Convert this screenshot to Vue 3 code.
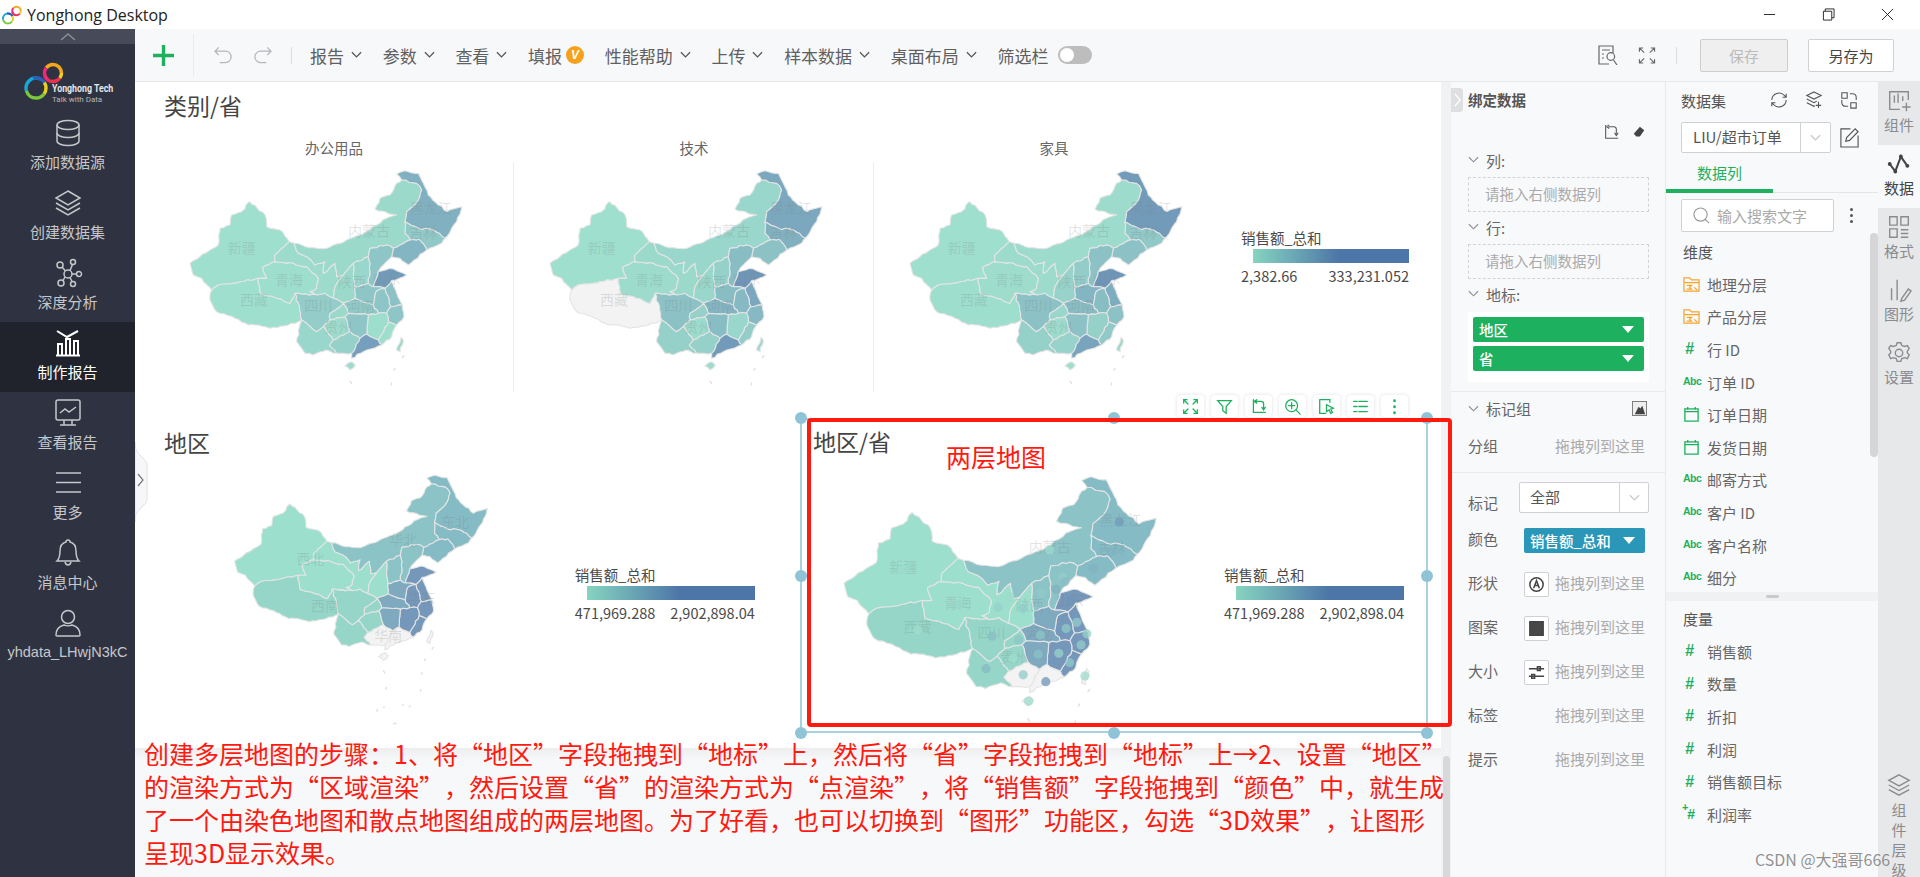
<template>
  <div class="app" lang="zh-CN">
    <!-- 标题栏 -->
    <header class="titlebar">
      <svg class="title-logo" viewBox="0 0 40 38">
        <circle v-for="a in ringArcs" :key="a.key" :cx="a.cx" :cy="a.cy" :r="a.r" :stroke="a.color" :stroke-dasharray="a.dash" :stroke-dashoffset="a.offset" stroke-width="4" fill="none" />
      </svg>
      <span class="title-text">Yonghong Desktop</span>
      <div class="win-btns">
        <svg viewBox="0 0 14 14" class="win-btn"><path d="M1 7h12" /></svg>
        <svg viewBox="0 0 14 14" class="win-btn"><path d="M1.5 3.5h9v9.5h-9zM3.5 3.5V1h9.5v9.5h-2.5" /></svg>
        <svg viewBox="0 0 14 14" class="win-btn"><path d="M1 1l12 12M13 1L1 13" /></svg>
      </div>
    </header>

    <div class="shell">
      <!-- 左侧导航 -->
      <aside class="sidebar">
        <div class="side-top">
          <svg viewBox="0 0 16 8" class="side-up"><path d="M1 7l7-6 7 6" /></svg>
        </div>
        <div class="side-logo">
          <svg class="side-rings" viewBox="0 0 40 38">
            <circle v-for="a in ringArcs" :key="a.key" :cx="a.cx" :cy="a.cy" :r="a.r" :stroke="a.color" :stroke-dasharray="a.dash" :stroke-dashoffset="a.offset" stroke-width="3.4" fill="none" />
          </svg>
          <div class="side-brand">
            <div class="brand-name">Yonghong Tech</div>
            <div class="brand-sub">Talk with Data</div>
          </div>
        </div>
        <div v-for="item in navItems" :key="item.label" class="nav-item" :class="{ active: item.active }">
          <svg viewBox="0 0 30 30" class="nav-icon"><path v-for="d in item.icon" :key="d" :d="d" /></svg>
          <span class="nav-label" :class="{ user: item.user }">{{ item.label }}</span>
        </div>
        <div class="side-handle">
          <svg viewBox="0 0 13 80" width="13" height="80">
            <path d="M0 0c0 8 2 10 6 14 5 5 6 6 6 10v32c0 4-1 5-6 10-4 4-6 6-6 14z" fill="#f6f7f9" stroke="#dfe1e6" />
            <path d="M3 32l5 6-5 6" fill="none" stroke="#777" stroke-width="1.2" />
          </svg>
        </div>
      </aside>

      <main class="main">
        <!-- 工具栏 -->
        <div class="toolbar">
          <svg viewBox="0 0 22 22" class="tb-plus"><path d="M11 0v22M0 11h22" /></svg>
          <i class="tb-sep tall"></i>
          <svg viewBox="0 0 20 18" class="tb-undo"><path d="M5 1L1 5l4 4M1 5h11a6 6 0 0 1 0 12H6" /></svg>
          <svg viewBox="0 0 20 18" class="tb-undo redo"><path d="M15 1l4 4-4 4M19 5H8a6 6 0 0 0 0 12h6" /></svg>
          <i class="tb-sep"></i>
          <div class="tb-menu">
            <div v-for="m in menus" :key="m.label" class="tb-item">
              <span>{{ m.label }}</span>
              <svg v-if="m.chevron" viewBox="0 0 12 8" class="chev"><path d="M1 1l5 5 5-5" /></svg>
              <b v-if="m.badge" class="v-badge">V</b>
              <i v-if="m.toggle" class="toggle"></i>
            </div>
          </div>
          <div class="tb-right">
            <svg viewBox="0 0 20 20" class="tb-tool"><path d="M15 8V1H1v18h10M4 5h8M4 9h2M4 13h2" /><path d="M9 9.5a3.8 3.8 0 1 0 7.6 0a3.8 3.8 0 1 0-7.6 0zM15.5 13l3.5 5" transform="translate(0 2)" /></svg>
            <svg viewBox="0 0 18 18" class="tb-tool small"><path d="M1 5V1h4M1 1l5 5M17 5V1h-4M17 1l-5 5M1 13v4h4M1 17l5-5M17 13v4h-4M17 17l-5-5" /></svg>
            <i class="tb-sep"></i>
            <button class="btn disabled">保存</button>
            <button class="btn">另存为</button>
          </div>
        </div>

        <div class="workspace">
          <!-- 报告画布 -->
          <section class="canvas">
            <div class="row-top">
              <h2 class="w-title">类别/省</h2>
              <div class="facet-row">
                <div v-for="f in facets" :key="f.title" class="facet">
                  <div class="facet-title">{{ f.title }}</div>
                  <div class="facet-body">
                    <ChinaMap class="facet-map" :fills="f.fills" :scale="1 / 3" :vw="1080" :vh="687" inset />
                  </div>
                </div>
                <div class="legend narrow top-legend">
                  <div class="legend-title">销售额_总和</div>
                  <div class="legend-bar"></div>
                  <div class="legend-range"><span>2,382.66</span><span>333,231.052</span></div>
                </div>
              </div>
            </div>

            <div class="row-bottom">
              <div class="widget plain">
                <h2 class="w-title">地区</h2>
                <div class="w-body">
                  <ChinaMap class="region-map" :fills="regionFills" :scale="0.31" :vw="1080" :vh="840" region :labels="regionLabels" />
                  <div class="legend">
                    <div class="legend-title">销售额_总和</div>
                    <div class="legend-bar"></div>
                    <div class="legend-range"><span>471,969.288</span><span>2,902,898.04</span></div>
                  </div>
                </div>
              </div>

              <div class="widget selected">
                <h2 class="w-title">地区/省</h2>
                <div class="w-body">
                  <ChinaMap class="layer-map" :fills="regionFills" :scale="0.383" :vw="1000" :vh="690" region inset :dots="dots" />
                  <div class="legend">
                    <div class="legend-title">销售额_总和</div>
                    <div class="legend-bar"></div>
                    <div class="legend-range"><span>471,969.288</span><span>2,902,898.04</span></div>
                  </div>
                </div>
                <div class="map-note">两层地图</div>
                <i v-for="h in handles" :key="h" class="handle" :class="h"></i>
                <div class="w-tools">
                  <span v-for="(t, i) in widgetTools" :key="i" class="w-tool">
                    <svg viewBox="0 0 20 20"><path v-for="d in t" :key="d" :d="d" /></svg>
                  </span>
                </div>
              </div>
            </div>

            <div class="canvas-foot">
              <p class="note">
                <span>创建多层地图的步骤：1、将“地区”字段拖拽到“地标”上，然后将“省”字段拖拽到“地标”上→2、设置“地区”</span>
                <span>的渲染方式为“区域渲染”，然后设置“省”的渲染方式为“点渲染”，将“销售额”字段拖拽到“颜色”中，就生成</span>
                <span>了一个由染色地图和散点地图组成的两层地图。为了好看，也可以切换到“图形”功能区，勾选“3D效果”，让图形</span>
                <span>呈现3D显示效果。</span>
              </p>
            </div>
          </section>

          <div class="gutter"><i></i></div>

          <!-- 绑定数据 -->
          <section class="bind">
            <div class="bind-tab">
              <svg viewBox="0 0 8 16"><path d="M1 1l6 7-6 7" /></svg>
            </div>
            <div class="bind-head">绑定数据</div>
            <div class="bind-tools">
              <svg viewBox="0 0 18 18" class="bind-ico"><path d="M3 1v15h14M6 3h6a3 3 0 0 1 3 3v5M4 3l3-2M4 3l3 2M13 10l2 3 2-3" /></svg>
              <svg viewBox="0 0 16 16" class="bind-ico solid"><path d="M9 2l5 4-5 7H5L2 10z" /></svg>
            </div>

            <div class="bind-label"><svg viewBox="0 0 12 8" class="chev light"><path d="M1 1l5 5 5-5" /></svg>列:</div>
            <div class="drop">请拖入右侧数据列</div>
            <div class="bind-label"><svg viewBox="0 0 12 8" class="chev light"><path d="M1 1l5 5 5-5" /></svg>行:</div>
            <div class="drop">请拖入右侧数据列</div>
            <div class="bind-label"><svg viewBox="0 0 12 8" class="chev light"><path d="M1 1l5 5 5-5" /></svg>地标:</div>
            <div class="geo-box">
              <div class="pill">地区<i class="caret"></i></div>
              <div class="pill">省<i class="caret"></i></div>
            </div>

            <div class="mark-head">
              <svg viewBox="0 0 12 8" class="chev light"><path d="M1 1l5 5 5-5" /></svg>标记组
              <svg viewBox="0 0 16 16" class="mark-ico"><rect x="0.5" y="0.5" width="15" height="15" fill="#eee" stroke="#777" /><path d="M3 14l4-8 2 2 2-3 3 9z" fill="#444" /></svg>
            </div>
            <div class="mark-row group"><label>分组</label><span class="hint">拖拽列到这里</span></div>
            <div class="mark-row select-row">
              <label>标记</label>
              <div class="mark-select"><span>全部</span><i><svg viewBox="0 0 12 8" class="chev pale"><path d="M1 1l5 5 5-5" /></svg></i></div>
            </div>
            <div class="mark-row"><label>颜色</label><div class="pill blue">销售额_总和<i class="caret"></i></div></div>
            <div v-for="r in markRows" :key="r.label" class="mark-row">
              <label>{{ r.label }}</label>
              <span v-if="r.icon" class="mark-box">
                <svg viewBox="0 0 20 20"><path v-for="d in r.icon" :key="d" :d="d" :class="r.solid ? 'fill' : ''" /></svg>
              </span>
              <span class="hint">拖拽列到这里</span>
            </div>
          </section>

          <!-- 数据集 -->
          <section class="dataset">
            <div class="ds-head">
              <span>数据集</span>
              <div class="ds-icons">
                <svg viewBox="0 0 20 20"><path d="M2 10a8 8 0 0 1 14-5l2 2M18 3v4h-4M18 10a8 8 0 0 1-14 5l-2-2M2 17v-4h4" /></svg>
                <svg viewBox="0 0 20 20"><path d="M10 1l8 4-8 4-8-4zM2 9l8 4 3-1.5M2 13l8 4 1-.5M15 12v7M12 16h6" /></svg>
                <svg viewBox="0 0 20 20"><path d="M2 2h6v6H2zM12 13h6v6h-6zM11 3h3a4 4 0 0 1 4 4v3M9 17H6a4 4 0 0 1-4-4v-3" /></svg>
              </div>
            </div>
            <div class="ds-select-row">
              <div class="ds-select"><span>LIU/超市订单</span><i><svg viewBox="0 0 12 8" class="chev pale"><path d="M1 1l5 5 5-5" /></svg></i></div>
              <svg viewBox="0 0 22 22" class="ds-edit"><path d="M12 2H2v19h18V9M7 15l1-4 9-9 3 3-9 9z" /></svg>
            </div>
            <div class="ds-tabs"><span class="ds-tab">数据列</span></div>
            <div class="ds-search-row">
              <div class="ds-search">
                <svg viewBox="0 0 18 18"><path d="M1 8a7 7 0 1 0 14 0a7 7 0 1 0-14 0zM13 13l4 4" /></svg>
                <span>输入搜索文字</span>
              </div>
              <i class="kebab"><b></b><b></b><b></b></i>
            </div>

            <div class="fields upper">
              <div class="field-head">维度</div>
              <div v-for="f in dimensions" :key="f.name" class="field">
                <span class="field-ico">
                  <svg v-if="f.type === 'folder'" viewBox="0 0 18 18" class="ico-folder"><path d="M1 2h6l2 2h8v12H1zM1 7h16M4 10h5l-2 2 2 2H4M12 12l3 3" /></svg>
                  <svg v-else-if="f.type === 'date'" viewBox="0 0 18 18" class="ico-date"><path d="M2 3h14v13H2zM2 6h14M5 1v3M13 1v3" /></svg>
                  <b v-else-if="f.type === 'abc'" class="ico-abc">Abc</b>
                  <b v-else class="ico-num">#</b>
                </span>
                <span>{{ f.name }}</span>
              </div>
              <i class="fields-thumb"></i>
            </div>
            <div class="band"><i></i></div>
            <div class="fields">
              <div class="field-head low">度量</div>
              <div v-for="f in measures" :key="f.name" class="field">
                <span class="field-ico">
                  <b class="ico-num" :class="{ calc: f.calc }">#</b>
                  <b v-if="f.calc" class="ico-plus">+</b>
                </span>
                <span>{{ f.name }}</span>
              </div>
            </div>
          </section>

          <!-- 右侧标签 -->
          <nav class="rail">
            <div v-for="r in railItems" :key="r.label" class="rail-item" :class="{ on: r.on }">
              <svg viewBox="0 0 28 28"><path v-for="d in r.icon" :key="d" :d="d" /></svg>
              <span>{{ r.label }}</span>
            </div>
            <div class="rail-item layers">
              <svg viewBox="0 0 28 28"><path d="M14 3l11 6-11 6-11-6zM3 14l11 6 11-6M3 19l11 6 11-6" /></svg>
              <span>组件层级</span>
            </div>
          </nav>

          <div class="red-frame"></div>
        </div>
      </main>
    </div>
    <div class="watermark">CSDN @大强哥666</div>
  </div>
</template>

<script setup>
import { h } from 'vue'

const circle = (x, y, r) => `M${x - r} ${y}a${r} ${r} 0 1 0 ${2 * r} 0a${r} ${r} 0 1 0 ${-2 * r} 0`

// logo 两个圆环，用分段虚线拼颜色
const arc = (key, cx, cy, r, color, from, len) => {
  const c = 2 * Math.PI * r
  return { key, cx, cy, r, color, dash: `${c * len} ${c * (1 - len)}`, offset: -c * from }
}
const ringArcs = [
  arc('b1', 12, 26, 10, '#17a7d8', 0.45, 0.35),
  arc('b2', 12, 26, 10, '#2b5fb8', 0.7, 0.2),
  arc('b3', 12, 26, 10, '#7cc83c', 0.1, 0.35),
  arc('b4', 12, 26, 10, '#e8d020', 0.9, 0.2),
  arc('r1', 29, 11, 8.5, '#f5a81c', 0.6, 0.4),
  arc('r2', 29, 11, 8.5, '#ee2f4e', 0.1, 0.35),
  arc('r3', 29, 11, 8.5, '#ec2a7c', 0.35, 0.25),
  arc('r4', 29, 11, 8.5, '#f0d020', 0, 0.1),
]

const navItems = [
  { label: '添加数据源', icon: ['M4 7a11 4.5 0 0 1 22 0a11 4.5 0 0 1-22 0', 'M4 7v16a11 4.5 0 0 0 22 0V7', 'M4 15a11 4.5 0 0 0 22 0'] },
  { label: '创建数据集', icon: ['M15 3l12 7-12 7-12-7z', 'M3 15l12 7 12-7', 'M3 20l12 7 12-7'] },
  { label: '深度分析', icon: [circle(15, 16, 4), circle(7, 7, 3), circle(20, 4, 2.5), circle(26, 16, 2.5), circle(20, 26, 2.5), circle(8, 25, 3), 'M17 12.5l2.5-6M18.5 16H23.5M17 19.5l2 4M12 19l-2 3.5M12.5 13L9 9'] },
  { label: '制作报告', active: true, icon: ['M5 27V16h4v11', 'M13 27V11h4v16', 'M21 27V13h4v14', 'M3 27.5h24', 'M4 3l10 6 11-6'] },
  { label: '查看报告', icon: ['M5 2h20a2 2 0 0 1 2 2v16a2 2 0 0 1-2 2H5a2 2 0 0 1-2-2V4a2 2 0 0 1 2-2z', 'M7 15l5-4 4 3 7-5', 'M11 22v5M19 22v5M7 27h16'] },
  { label: '更多', icon: ['M3 5h25', 'M3 14.5h25', 'M3 24h25'] },
  { label: '消息中心', icon: ['M15 2c-1.5 0-2 1-2 2-4 1-6 4-6 9 0 6-1 8-3 10h22c-2-2-3-4-3-10 0-5-2-8-6-9 0-1-.5-2-2-2z', 'M12 24c.5 2 1.5 3 3 3s2.5-1 3-3'] },
  { label: 'yhdata_LHwjN3kC', user: true, icon: [circle(15, 9, 6.5), 'M3 27c0-6 4-9 8-10 2 1 6 1 8 0 4 1 8 4 8 10 0 .8-.5 1-1 1H4c-.5 0-1-.2-1-1z'] },
]

const menus = [
  { label: '报告', chevron: true },
  { label: '参数', chevron: true },
  { label: '查看', chevron: true },
  { label: '填报', badge: true },
  { label: '性能帮助', chevron: true },
  { label: '上传', chevron: true },
  { label: '样本数据', chevron: true },
  { label: '桌面布局', chevron: true },
  { label: '筛选栏', toggle: true },
]

const handles = ['tl', 'tc', 'tr', 'ml', 'mr', 'bl', 'bc', 'br']

const widgetTools = [
  ['M2 6V2h4M14 2h4v4M2 14v4h4M18 14v4h-4M3 3l4 4M17 3l-4 4M3 17l4-4M17 17l-4-4'],
  ['M2 3h16l-6 7v8l-4-3v-5z'],
  ['M4 2v15h14M7 4h6a3 3 0 0 1 3 3v5M5 4l3-2M5 4l3 2M14 11l2 3 2-3'],
  [circle(9, 9, 7), 'M14 14l5 5M9 5.5v7M5.5 9h7'],
  ['M2 2h12v3M2 2v16h7', 'M10 8l8 4-3 1 2 4-2 1-2-4-3 2z'],
  ['M2 4h4M8 4h10M2 10h4M8 10h10M2 16h4M8 16h10'],
  ['M10 3v.5M10 10v.5M10 17v.5'],
]

const markRows = [
  { label: '形状', icon: [circle(10, 10, 7), 'M7 14l3-8 3 8M8 11h4'] },
  { label: '图案', solid: true, icon: ['M3 3h14v14H3z'] },
  { label: '大小', icon: ['M2 6h16M2 14h16', 'M11 4h3v4h-3zM5 12h3v4H5z'] },
  { label: '标签' },
  { label: '提示' },
]

const dimensions = [
  { name: '地理分层', type: 'folder' },
  { name: '产品分层', type: 'folder' },
  { name: '行 ID', type: 'num' },
  { name: '订单 ID', type: 'abc' },
  { name: '订单日期', type: 'date' },
  { name: '发货日期', type: 'date' },
  { name: '邮寄方式', type: 'abc' },
  { name: '客户 ID', type: 'abc' },
  { name: '客户名称', type: 'abc' },
  { name: '细分', type: 'abc' },
]

const measures = [
  { name: '销售额' },
  { name: '数量' },
  { name: '折扣' },
  { name: '利润' },
  { name: '销售额目标' },
  { name: '利润率', calc: true },
]

const railItems = [
  { label: '组件', icon: ['M24 13V4H4v19h11', 'M9 8v8M13 6v10M18 9v5', 'M22 16v9M17.5 20.5h9'] },
  { label: '数据', on: true, icon: ['M4 14l6 8 6-16 7 10', circle(4, 14, 1), circle(10, 22, 1), circle(16, 6, 1), circle(23, 16, 1)] },
  { label: '格式', icon: ['M4 3h8v9H4zM16 3h8v9h-8zM4 16h8v9H4z', 'M16 17h8M16 21h8M16 25h8'] },
  { label: '图形', icon: ['M6 12v13M12 3v22', 'M17 23l7-10 3 2-7 10-4 1z'] },
  { label: '设置', icon: [circle(14, 14, 4), 'M12 3h4l1 3 3 1 3-1 2 3-2 3v2l2 2-2 4-3-1-3 1-1 3h-4l-1-3-3-1-3 1-2-4 2-2v-2l-2-3 2-3 3 1 3-1z'] },
]

// 省份轮廓，坐标系是 1080x750 的地图单位
const provinces = {
  xj: [60, 340, 90, 320, 145, 285, 150, 235, 180, 225, 185, 195, 215, 185, 238, 155, 262, 175, 285, 195, 290, 230, 330, 240, 358, 275, 315, 315, 315, 335, 278, 352, 290, 385, 265, 385, 190, 400, 145, 405, 125, 420, 95, 385, 70, 375],
  xz: [125, 420, 145, 405, 190, 400, 265, 385, 272, 432, 310, 440, 360, 460, 375, 430, 392, 490, 395, 510, 355, 525, 300, 535, 265, 525, 235, 525, 195, 505, 140, 485, 120, 450],
  qh: [278, 352, 315, 335, 370, 340, 410, 350, 445, 385, 440, 415, 420, 425, 440, 435, 385, 430, 375, 430, 360, 460, 310, 440, 272, 432, 265, 385, 290, 385],
  gs: [358, 275, 372, 280, 385, 310, 410, 320, 435, 345, 465, 335, 460, 370, 495, 340, 500, 380, 520, 375, 495, 410, 490, 445, 465, 430, 440, 435, 420, 425, 440, 415, 445, 385, 410, 350, 370, 340, 315, 335, 315, 315],
  nm: [372, 280, 430, 293, 470, 295, 530, 270, 570, 255, 620, 225, 650, 205, 680, 195, 615, 178, 630, 145, 660, 135, 680, 100, 695, 90, 740, 100, 755, 120, 745, 150, 710, 185, 705, 215, 705, 250, 720, 270, 670, 295, 650, 285, 600, 295, 595, 320, 550, 340, 520, 375, 500, 380, 495, 340, 460, 370, 465, 335, 435, 345, 410, 320, 385, 310],
  hlj: [680, 72, 705, 62, 745, 70, 760, 100, 775, 135, 830, 185, 875, 170, 860, 215, 825, 265, 790, 240, 745, 235, 705, 215, 710, 185, 745, 150, 755, 120, 740, 100, 695, 90],
  jl: [705, 215, 745, 235, 790, 240, 825, 265, 815, 280, 770, 300, 748, 268, 720, 270, 705, 250],
  ln: [670, 295, 720, 270, 748, 268, 770, 300, 715, 345, 690, 325, 665, 320],
  heb: [600, 295, 650, 285, 670, 295, 665, 320, 640, 345, 625, 365, 610, 410, 595, 400, 600, 340, 595, 320],
  sx: [550, 340, 595, 320, 600, 340, 595, 400, 555, 412, 550, 375],
  sax: [520, 375, 550, 340, 550, 375, 555, 412, 555, 445, 520, 460, 490, 445, 495, 410],
  sd: [625, 365, 660, 355, 710, 375, 665, 392, 645, 415, 610, 410],
  hen: [555, 412, 595, 400, 610, 410, 645, 415, 618, 425, 610, 465, 555, 445],
  js: [645, 415, 665, 392, 680, 430, 697, 465, 662, 470, 655, 440],
  ah: [618, 425, 645, 415, 655, 440, 662, 470, 650, 490, 625, 490, 610, 465],
  hub: [520, 460, 555, 445, 610, 465, 625, 490, 595, 495, 535, 490, 530, 475],
  zj: [662, 470, 697, 465, 702, 500, 680, 525, 655, 515, 650, 490],
  fj: [655, 515, 680, 525, 665, 560, 635, 585, 625, 570],
  jx: [595, 495, 625, 490, 650, 490, 655, 515, 625, 570, 590, 552],
  hun: [535, 490, 595, 495, 590, 552, 570, 565, 540, 545, 525, 500],
  cq: [480, 490, 520, 460, 530, 475, 535, 490, 525, 500, 480, 510],
  gz: [460, 530, 480, 510, 525, 500, 540, 545, 490, 570],
  sc: [375, 430, 385, 430, 440, 435, 465, 430, 490, 445, 520, 460, 480, 490, 480, 510, 460, 530, 440, 545, 395, 510, 392, 490],
  yn: [395, 510, 440, 545, 460, 530, 490, 570, 478, 585, 500, 610, 470, 600, 430, 615, 405, 610, 380, 575],
  gx: [490, 570, 540, 545, 570, 565, 545, 610, 500, 610, 478, 585],
  gd: [570, 565, 590, 552, 625, 570, 635, 585, 580, 605, 545, 625, 545, 610],
  hi: [525, 648, 545, 635, 556, 645, 540, 660],
  tw: [680, 600, 693, 562, 700, 570, 690, 605],
}

// 区域图按这个分组，同组之间不画边界
const regionOf = {
  xj: 'nw', qh: 'nw', gs: 'nw', sax: 'nw',
  xz: 'sw', sc: 'sw', yn: 'sw', gz: 'sw', cq: 'sw',
  nm: 'n', heb: 'n', sx: 'n',
  hlj: 'ne', jl: 'ne', ln: 'ne',
  sd: 'e', js: 'e', ah: 'e', zj: 'e', fj: 'e', jx: 'e',
  hen: 'c', hub: 'c', hun: 'c',
  gd: 's', gx: 's', hi: 's', tw: 's',
}

const lerp = (v) => {
  const t = Math.pow(v, 1.3)
  const a = [159, 223, 205]
  const b = [111, 150, 185]
  return `rgb(${a.map((c, i) => Math.round(c + (b[i] - c) * t)).join(',')})`
}
const shade = (vals) => {
  const out = {}
  Object.keys(vals).forEach((k) => { out[k] = vals[k] === null ? '#f3f3f3' : lerp(vals[k]) })
  return out
}

const facets = [
  { title: '办公用品', fills: shade({ xj: 0.02, xz: 0, qh: 0.05, gs: 0.1, nm: 0.15, hlj: 0.7, jl: 0.4, ln: 0.65, heb: 0.45, sx: 0.2, sax: 0.15, sd: 0.95, hen: 0.45, js: 0.5, ah: 0.45, hub: 0.4, zj: 0.45, jx: 0.05, fj: 0.03, hun: 0.45, gd: 0.9, gx: 0.3, gz: 0.1, cq: 0.15, sc: 0.35, yn: 0.2, hi: 0.08, tw: 0.2 }) },
  { title: '技术', fills: shade({ xj: 0.02, xz: null, qh: 0.08, gs: 0.15, nm: 0.2, hlj: 0.8, jl: 0.7, ln: 0.5, heb: 0.55, sx: 0.3, sax: 0.2, sd: 1, hen: 0.55, js: 0.8, ah: 0.6, hub: 0.65, zj: 0.6, jx: 0.2, fj: 0.35, hun: 0.55, gd: 0.95, gx: 0.3, gz: 0.1, cq: 0.3, sc: 0.5, yn: 0.3, hi: 0.1, tw: 0.2 }) },
  { title: '家具', fills: shade({ xj: 0, xz: 0.05, qh: 0.06, gs: 0.1, nm: 0.1, hlj: 0.95, jl: 0.4, ln: 0.5, heb: 0.5, sx: 0.35, sax: 0.25, sd: 1, hen: 0.65, js: 0.75, ah: 0.55, hub: 0.55, zj: 0.5, jx: 0.3, fj: 0.4, hun: 0.5, gd: 0.85, gx: 0.25, gz: 0.1, cq: 0.2, sc: 0.5, yn: 0.3, hi: 0.05, tw: 0.2 }) },
]

const regionColors = { nw: '#9cdfcd', sw: '#95d6c8', n: '#8bc3c6', ne: '#84bbc5', e: '#7597ba', c: '#7ea9bf', s: '#f3f3f3' }
const regionFills = {}
Object.keys(regionOf).forEach((k) => { regionFills[k] = regionColors[regionOf[k]] })

const provinceLabels = [
  ['新疆', 215, 310], ['内蒙古', 597, 258], ['黑龙江', 782, 188], ['吉林', 760, 264], ['青海', 357, 404], ['西藏', 252, 466],
  ['四川', 445, 482], ['陕西', 545, 410], ['河南', 572, 482], ['山东', 650, 398], ['贵州', 505, 545],
]
const regionLabels = [
  ['西北', 305, 350], ['华北', 604, 286], ['东北', 771, 228], ['西南', 352, 501], ['华东', 663, 476], ['华南', 556, 598],
]

const dots = [
  [779, 180, 0.95], [757, 258, 0.7], [711, 301, 0.7], [597, 253, 0.1], [216, 304, 0.1], [359, 396, 0.2], [253, 462, 0], [462, 403, 0.3],
  [493, 375, 0.1], [528, 406, 0.35], [447, 478, 0.55], [516, 488, 0.45], [502, 536, 0.05], [431, 563, 0.6], [528, 579, 0.4], [587, 597, 1],
  [542, 648, 0.15], [689, 582, 0.1], [649, 547, 0.4], [621, 523, 0.25], [567, 525, 0.5], [573, 475, 0.45], [640, 458, 0.4], [679, 501, 0.35],
  [694, 472, 0.3], [668, 442, 0.35], [589, 429, 0.75], [653, 386, 1], [614, 356, 0.7], [576, 365, 0.4], [631, 323, 0.35], [637, 336, 0.55],
]

const seaDashes = [[535, 690, 541, 700], [663, 690, 661, 700], [668, 660, 675, 650], [692, 622, 700, 612], [708, 590, 712, 570]]
const regionDashes = [[540, 692, 545, 702], [550, 745, 547, 755], [520, 816, 520, 826], [538, 812, 545, 810], [600, 806, 606, 802], [622, 811, 628, 805], [572, 865, 582, 861], [662, 752, 658, 760], [665, 698, 663, 706], [676, 654, 671, 662], [702, 616, 696, 624]]
const insetDashes = [[915, 505, 912, 515], [900, 540, 897, 548], [893, 570, 893, 578], [821, 608, 821, 615], [890, 612, 888, 618], [805, 660, 803, 668], [815, 656, 812, 660], [855, 652, 852, 656], [868, 652, 864, 658]]

// 边界抖动：噪声只看坐标，相邻两省共用的边抖得一样，不会裂开
const noise = (x, y) => {
  const v = Math.sin(x * 12.9898 + y * 78.233) * 43758.5453
  return (v - Math.floor(v)) * 2 - 1
}
const roughEdge = (ax, ay, bx, by) => {
  const flip = ax > bx || (ax === bx && ay > by)
  const [x1, y1, x2, y2] = flip ? [bx, by, ax, ay] : [ax, ay, bx, by]
  const len = Math.hypot(x2 - x1, y2 - y1)
  const n = Math.max(1, Math.round(len / 11))
  const out = []
  for (let i = 1; i < n; i++) {
    const px = x1 + ((x2 - x1) * i) / n
    const py = y1 + ((y2 - y1) * i) / n
    const off = noise(Math.round(px), Math.round(py)) * 2.6
    out.push([px - ((y2 - y1) / len) * off, py + ((x2 - x1) / len) * off])
  }
  return flip ? out.reverse() : out
}
const fmt = (p) => `${p[0].toFixed(1)},${p[1].toFixed(1)}`
const roughPoints = (arr) => {
  const out = []
  for (let i = 0; i < arr.length; i += 2) {
    const j = (i + 2) % arr.length
    out.push(`${arr[i]},${arr[i + 1]}`)
    roughEdge(arr[i], arr[i + 1], arr[j], arr[j + 1]).forEach((p) => out.push(fmt(p)))
  }
  return out.join(' ')
}
const shapes = {}
Object.keys(provinces).forEach((k) => { shapes[k] = roughPoints(provinces[k]) })

// 找出两侧属于不同区域的边，区域图只描这些边
const edgeOwners = {}
Object.keys(provinces).forEach((k) => {
  const arr = provinces[k]
  for (let i = 0; i < arr.length; i += 2) {
    const j = (i + 2) % arr.length
    const a = [arr[i], arr[i + 1]]
    const b = [arr[j], arr[j + 1]]
    const first = a[0] < b[0] || (a[0] === b[0] && a[1] < b[1])
    const key = (first ? [...a, ...b] : [...b, ...a]).join(',')
    edgeOwners[key] = edgeOwners[key] || []
    edgeOwners[key].push(regionOf[k])
  }
})
const regionBorders = Object.keys(edgeOwners)
  .filter((key) => edgeOwners[key].length === 2 && edgeOwners[key][0] !== edgeOwners[key][1])
  .map((key) => {
    const [ax, ay, bx, by] = key.split(',').map(Number)
    return [`${ax},${ay}`, ...roughEdge(ax, ay, bx, by).map(fmt), `${bx},${by}`].join(' ')
  })

// 地图重复了五次，写成函数组件
const ChinaMap = (props) => {
  const s = props.scale
  const sw = 1.3 / s
  const fontSize = 14 / s
  const kids = []
  const line = (d, color) => h('line', { x1: d[0], y1: d[1], x2: d[2], y2: d[3], stroke: color, 'stroke-width': sw })
  const label = (t, x, y, fill, size) => h('text', { x, y, fill, 'font-size': size || fontSize, 'text-anchor': 'middle' }, t)
  const keys = Object.keys(provinces)

  if (props.region) {
    keys.forEach((k) => kids.push(h('polygon', { points: shapes[k], fill: props.fills[k], stroke: '#dedede', 'stroke-width': sw * 1.8, 'stroke-linejoin': 'round' })))
    keys.forEach((k) => kids.push(h('polygon', { points: shapes[k], fill: props.fills[k], stroke: props.fills[k], 'stroke-width': sw * 0.5, 'stroke-linejoin': 'round' })))
    regionBorders.forEach((p) => kids.push(h('polyline', { points: p, fill: 'none', stroke: '#dfdfdf', 'stroke-width': sw * 0.9, 'stroke-linejoin': 'round' })))
  } else {
    keys.forEach((k) => kids.push(h('polygon', { points: shapes[k], fill: props.fills[k], stroke: '#e4e4e4', 'stroke-width': sw * 0.85, 'stroke-linejoin': 'round' })))
  }

  ;(props.inset ? seaDashes : regionDashes).forEach((d) => kids.push(line(d, '#dedede')))

  if (props.inset) {
    kids.push(h('rect', { x: 787, y: 480, width: 142, height: 213, fill: 'none', stroke: '#e6e6e6', 'stroke-width': sw * 0.9 }))
    const coast = props.region ? ['#f1f1f1', '#f1f1f1', '#f1f1f1'] : ['#9adccb', '#7ba6c0', '#9adccb']
    kids.push(h('polygon', { points: '790,484 830,484 815,507 795,500', fill: coast[0] }))
    kids.push(h('polygon', { points: '830,484 875,484 825,510 817,530', fill: coast[1] }))
    kids.push(h('polygon', { points: '810,530 825,528 815,546', fill: coast[2] }))
    kids.push(h('polygon', { points: '903,484 913,484 905,500', fill: coast[2] }))
    insetDashes.forEach((d) => kids.push(line(d, '#e0e0e0')))
    kids.push(label('赤尾屿', 755, 563, 'rgba(150,150,150,.5)', 15 / s))
  }

  const labels = props.labels || (props.region ? [] : provinceLabels)
  labels.forEach((l) => kids.push(label(l[0], l[1], l[2], 'rgba(120,130,130,.22)')))

  if (props.region && !props.inset) kids.push(label('港澳台', 701, 588, 'rgba(150,150,150,.5)'))
  if (props.region && props.inset) {
    provinceLabels.forEach((l) => kids.push(label(l[0], l[1], l[2], 'rgba(120,130,130,.18)')))
    kids.push(label('南海诸岛', 866, 676, 'rgba(150,150,150,.45)', 13 / s))
  }

  if (props.dots) {
    props.dots.forEach((d) => kids.push(h('circle', { cx: d[0], cy: d[1], r: 12, fill: lerp(d[2]), 'fill-opacity': 0.75 })))
  }

  return h('svg', {
    width: props.vw * s,
    height: props.vh * s,
    viewBox: `0 39 ${props.vw} ${props.vh}`,
    'font-family': '"Noto Sans CJK SC", sans-serif',
  }, kids)
}
ChinaMap.props = ['fills', 'scale', 'vw', 'vh', 'region', 'inset', 'labels', 'dots']
</script>

<style scoped>
.app {
  width: 1920px;
  height: 877px;
  overflow: hidden;
  position: relative;
  display: flex;
  flex-direction: column;
  background: #fff;
  color: #555;
  font-family: "Noto Sans CJK SC", "Noto Sans", sans-serif;
  font-size: 15px;
}
svg {
  display: block;
  flex: none;
}
h2, p {
  margin: 0;
  font-weight: 400;
}
i {
  font-style: normal;
}

/* 标题栏 */
.titlebar {
  height: 29px;
  flex: none;
  display: flex;
  align-items: center;
  background: #fff;
  padding-left: 2px;
}
.title-logo {
  width: 20px;
  height: 20px;
}
.title-text {
  margin-left: 5px;
  font-family: "Open Sans", sans-serif;
  font-size: 16px;
  color: #222;
}
.win-btns {
  margin-left: auto;
  display: flex;
  gap: 46px;
  padding-right: 26px;
}
.win-btn {
  width: 13px;
  height: 13px;
  fill: none;
  stroke: #222;
  stroke-width: 1;
}

.shell {
  flex: 1;
  display: flex;
  min-height: 0;
}

/* 左侧导航 */
.sidebar {
  width: 135px;
  flex: none;
  background: #2f3341;
  position: relative;
}
.side-top {
  height: 15px;
  background: #474a58;
  display: flex;
  align-items: center;
  justify-content: center;
}
.side-up {
  width: 16px;
  height: 8px;
  fill: none;
  stroke: #8c8e97;
  stroke-width: 1.5;
}
.side-logo {
  height: 68px;
  position: relative;
}
.side-rings {
  position: absolute;
  left: 24px;
  top: 18px;
  width: 40px;
  height: 38px;
}
.side-brand {
  position: absolute;
  left: 52px;
  top: 38px;
  white-space: nowrap;
}
.brand-name {
  font-family: "Roboto", sans-serif;
  font-size: 10px;
  font-weight: 700;
  line-height: 13px;
  color: #e6e6e8;
  transform-origin: left;
  transform: scaleX(0.88);
}
.brand-sub {
  font-family: "Roboto", sans-serif;
  font-size: 8px;
  line-height: 9px;
  color: #b4b5ba;
}
.nav-item {
  height: 70px;
  padding-top: 6px;
  box-sizing: border-box;
  display: flex;
  flex-direction: column;
  align-items: center;
  color: #c6c7cb;
}
.nav-item.active {
  background: #20232c;
  color: #fff;
}
.nav-icon {
  width: 30px;
  height: 30px;
  fill: none;
  stroke: currentColor;
  stroke-width: 1.5;
}
.nav-item.active .nav-icon {
  stroke-width: 2;
}
.nav-label {
  margin-top: 4px;
  line-height: 20px;
  font-size: 15px;
  white-space: nowrap;
}
.nav-label.user {
  font-family: "Liberation Sans", sans-serif;
  font-size: 14.5px;
}
.side-handle {
  position: absolute;
  left: 135px;
  top: 413px;
  z-index: 3;
}

.main {
  flex: 1;
  min-width: 0;
  display: flex;
  flex-direction: column;
}

/* 工具栏 */
.toolbar {
  height: 53px;
  flex: none;
  box-sizing: border-box;
  display: flex;
  align-items: center;
  background: #f7f8fa;
  border-bottom: 1px solid #e6e7eb;
  padding-left: 18px;
}
.tb-plus {
  width: 21px;
  height: 21px;
  fill: none;
  stroke: #1db05e;
  stroke-width: 3.5;
}
.tb-sep {
  width: 1px;
  height: 17px;
  background: #dcdde1;
  flex: none;
}
.tb-sep.tall {
  height: 43px;
  margin: 0 20px 0 19px;
  background: #eaebee;
}
.tb-undo {
  width: 19px;
  height: 18px;
  fill: none;
  stroke: #b4b6ba;
  stroke-width: 1.3;
}
.tb-undo.redo {
  margin-left: 20px;
  margin-right: 19px;
}
.tb-menu {
  display: flex;
  align-items: center;
  gap: 20.7px;
  margin-left: 18px;
}
.tb-item {
  display: flex;
  align-items: center;
  font-size: 17px;
  color: #5f5f5f;
  white-space: nowrap;
}
.chev {
  width: 11px;
  height: 8px;
  margin-left: 7px;
  fill: none;
  stroke: #555;
  stroke-width: 1.4;
}
.chev.light {
  margin: 0 7px 0 0;
  stroke: #8d8f93;
  stroke-width: 1.2;
}
.chev.pale {
  margin: 0;
  stroke: #c8c9cc;
}
.v-badge {
  width: 18px;
  height: 18px;
  margin-left: 4px;
  border-radius: 50%;
  background: #f5a11c;
  color: #fff;
  font-size: 12px;
  font-style: italic;
  font-family: "Liberation Sans", sans-serif;
  text-align: center;
  line-height: 18px;
}
.toggle {
  width: 34px;
  height: 18px;
  margin-left: 9px;
  border-radius: 9px;
  background: #bdbdbd;
  position: relative;
}
.toggle::before {
  content: "";
  position: absolute;
  left: 1px;
  top: 1px;
  width: 14px;
  height: 14px;
  border: 1px solid #bdbdbd;
  border-radius: 50%;
  background: #fff;
}
.tb-right {
  margin-left: auto;
  display: flex;
  align-items: center;
  padding-right: 26px;
}
.tb-tool {
  width: 20px;
  height: 20px;
  fill: none;
  stroke: #666;
  stroke-width: 1.2;
}
.tb-tool.small {
  width: 18px;
  height: 17px;
  margin: 0 20px;
}
.btn {
  width: 86px;
  height: 33px;
  margin-left: 20px;
  background: #fff;
  border: 1px solid #d0d1d4;
  border-radius: 2px;
  font: inherit;
  font-size: 15px;
  color: #444;
  padding: 0;
}
.btn.disabled {
  margin-left: 23px;
  width: 88px;
  background: #efefef;
  border-color: #cdcdcd;
  color: #bbb;
}

.workspace {
  flex: 1;
  min-height: 0;
  display: flex;
  position: relative;
}

/* 画布 */
.canvas {
  width: 1306px;
  flex: none;
  display: flex;
  flex-direction: column;
  background: #fff;
}
.w-title {
  font-size: 23px;
  line-height: 30px;
  color: #444;
  white-space: nowrap;
}
.row-top {
  height: 310px;
  flex: none;
}
.row-top .w-title {
  padding: 8px 0 15px 29px;
}
.facet-row {
  display: flex;
  padding-left: 19px;
}
.facet {
  width: 360px;
  flex: none;
}
.facet-title {
  height: 28px;
  line-height: 26px;
  text-align: center;
  font-size: 14.5px;
  color: #666;
}
.facet-body {
  height: 229px;
  box-sizing: border-box;
  padding-left: 16px;
  border-right: 1px solid #eceded;
  overflow: hidden;
}
.facet:nth-child(3) .facet-body {
  border-right: 0;
}
.legend {
  width: 180px;
  flex: none;
  margin-top: 97px;
  margin-left: 24px;
  font-size: 14.5px;
  color: #4a4a4a;
  white-space: nowrap;
}
.legend.narrow {
  width: 168px;
}
.top-legend {
  margin-top: 93px;
  margin-left: 7px;
}
.legend-title {
  line-height: 20px;
}
.legend-bar {
  height: 14px;
  margin: 1px 0 3px 12px;
  background: linear-gradient(90deg, #86d4c0, #4d76a8 55%, #4d76a8);
}
.legend-range {
  display: flex;
  justify-content: space-between;
  line-height: 20px;
}

.row-bottom {
  margin-top: 26px;
  height: 315px;
  flex: none;
  display: flex;
}
.widget.plain {
  width: 665px;
  flex: none;
}
.widget.plain .w-title {
  padding: 9px 0 11px 29px;
}
.w-body {
  display: flex;
  align-items: flex-start;
}
.region-map {
  margin-left: 81px;
}
.widget.selected {
  width: 628px;
  flex: none;
  box-sizing: border-box;
  border: 2px solid #a9d2e0;
  position: relative;
}
.widget.selected .w-title {
  padding: 6px 0 12px 11px;
}
.layer-map {
  margin-left: 19px;
}
.widget.selected .legend {
  margin-left: 20px;
}
.map-note {
  position: absolute;
  left: 144px;
  top: 19px;
  font-size: 25px;
  line-height: 34px;
  color: #ff1a10;
}
.handle {
  position: absolute;
  width: 12px;
  height: 12px;
  border-radius: 50%;
  background: #8fc3d6;
}
.handle.tl, .handle.tc, .handle.tr { top: -8px; }
.handle.ml, .handle.mr { top: 150px; }
.handle.bl, .handle.bc, .handle.br { bottom: -8px; }
.handle.tl, .handle.ml, .handle.bl { left: -7px; }
.handle.tc, .handle.bc { left: 306px; }
.handle.tr, .handle.mr, .handle.br { right: -7px; }
.w-tools {
  position: absolute;
  right: 18px;
  top: -25px;
  display: flex;
  gap: 6.5px;
}
.w-tool {
  width: 27.5px;
  height: 22px;
  display: flex;
  align-items: center;
  justify-content: center;
  background: #fff;
  border-radius: 4px;
  box-shadow: 0 0 4px rgba(0, 0, 0, 0.12);
}
.w-tool svg {
  width: 17px;
  height: 17px;
  fill: none;
  stroke: #1db05e;
  stroke-width: 1.5;
  stroke-linecap: round;
}
.w-tool:last-child svg {
  stroke-width: 3;
}
.canvas-foot {
  flex: 1;
  margin-top: 15px;
  padding-left: 9px;
  background: linear-gradient(#eeeeef, #f7f8fa 12px);
}
.note {
  margin-top: -11px;
  position: relative;
  z-index: 4;
  font-size: 25px;
  line-height: 33px;
  color: #ff1a10;
  white-space: nowrap;
  text-spacing-trim: space-all;
}
.note span {
  display: block;
}

.gutter {
  width: 10px;
  flex: none;
  background: #f1f2f4;
  position: relative;
}
.gutter i {
  position: absolute;
  left: 2px;
  right: 1px;
  top: 674px;
  bottom: 0;
  background: #d8d8d8;
  border-radius: 4px 4px 0 0;
}

/* 绑定数据 */
.bind {
  width: 215px;
  flex: none;
  box-sizing: border-box;
  padding: 0 16px 0 17px;
  background: #f8f9fb;
  border-right: 1px solid #e8e9ec;
  position: relative;
}
.bind-tab {
  position: absolute;
  left: 0;
  top: 6px;
  width: 12px;
  height: 24px;
  background: #dfdfe1;
  border-radius: 0 3px 3px 0;
  display: flex;
  align-items: center;
  justify-content: center;
}
.bind-tab svg {
  width: 7px;
  height: 14px;
  fill: none;
  stroke: #fff;
  stroke-width: 1.5;
}
.bind-head {
  height: 36px;
  line-height: 36px;
  font-size: 14.5px;
  font-weight: 700;
  color: #555;
}
.bind-tools {
  height: 27px;
  display: flex;
  align-items: center;
  justify-content: flex-end;
  gap: 13px;
  padding-right: 3px;
}
.bind-ico {
  width: 16px;
  height: 16px;
  fill: none;
  stroke: #555;
  stroke-width: 1.2;
}
.bind-ico.solid {
  width: 14px;
  height: 14px;
  fill: #444;
  stroke: none;
}
.bind-label {
  height: 32px;
  box-sizing: border-box;
  padding-bottom: 2px;
  display: flex;
  align-items: center;
  font-size: 15px;
  color: #666;
}
.drop {
  height: 35px;
  box-sizing: border-box;
  border: 1px dashed #d2d3d6;
  padding-left: 16px;
  line-height: 31px;
  font-size: 14.5px;
  color: #aaa;
  white-space: nowrap;
}
.geo-box {
  height: 70px;
  margin-top: 1px;
  box-sizing: border-box;
  padding: 5px;
  background: #fff;
}
.pill {
  height: 25px;
  display: flex;
  align-items: center;
  justify-content: space-between;
  padding: 0 10px 0 6px;
  margin-bottom: 4px;
  background: #1db05e;
  border-radius: 2px;
  color: #fff;
  font-size: 14.5px;
  font-weight: 500;
}
.pill.blue {
  width: 122px;
  background: #2a96b8;
  box-sizing: border-box;
  margin: 0 4px 0 auto;
  white-space: nowrap;
}
.caret {
  width: 0;
  height: 0;
  border-left: 6px solid transparent;
  border-right: 6px solid transparent;
  border-top: 7px solid #fff;
}
.mark-head {
  height: 36px;
  box-sizing: border-box;
  margin: 9px -16px 0 -17px;
  border-top: 1px solid #e8e9ec;
  padding: 0 17px 2px;
  display: flex;
  align-items: center;
  color: #666;
}
.mark-ico {
  width: 15px;
  height: 15px;
  margin-left: auto;
  margin-right: 1px;
}
.mark-row {
  height: 44px;
  display: flex;
  align-items: center;
  color: #666;
}
.mark-row label {
  width: 56px;
  flex: none;
  padding-bottom: 3px;
}
.mark-row.group {
  margin: 0 -16px 0 -17px;
  padding: 0 16px 6px 17px;
  border-bottom: 1px solid #e8e9ec;
  height: 46px;
  box-sizing: border-box;
}
.hint {
  margin-left: auto;
  margin-right: 4px;
  padding-bottom: 3px;
  color: #aaa;
  white-space: nowrap;
}
.mark-row.select-row {
  height: 31px;
  margin: 9px 0 5px;
}
.mark-row.select-row label {
  width: 51px;
  padding: 10px 0 0;
}
.mark-select {
  flex: 1;
  height: 31px;
  box-sizing: border-box;
  display: flex;
  background: #fff;
  border: 1px solid #d0d1d4;
  border-radius: 2px;
  line-height: 27px;
  padding-left: 10px;
  color: #555;
}
.mark-select span {
  flex: 1;
}
.mark-select i {
  width: 28px;
  border-left: 1px solid #d0d1d4;
  display: flex;
  align-items: center;
  justify-content: center;
}
.mark-box {
  width: 25px;
  height: 25px;
  box-sizing: border-box;
  border: 1px solid #d0d1d4;
  border-radius: 2px;
  background: #fff;
  display: flex;
  align-items: center;
  justify-content: center;
}
.mark-box svg {
  width: 19px;
  height: 19px;
  fill: none;
  stroke: #444;
  stroke-width: 1.6;
}
.mark-box .fill {
  fill: #484848;
}

/* 数据集 */
.dataset {
  width: 212px;
  flex: none;
  background: #f8f9fb;
  display: flex;
  flex-direction: column;
}
.ds-head {
  height: 36px;
  flex: none;
  display: flex;
  align-items: center;
  padding-left: 15px;
  color: #555;
}
.ds-icons {
  display: flex;
  margin-left: auto;
  gap: 17px;
  padding-right: 20px;
}
.ds-icons svg {
  width: 18px;
  height: 18px;
  fill: none;
  stroke: #555;
  stroke-width: 1.2;
}
.ds-select-row {
  margin-top: 4px;
  height: 31px;
  flex: none;
  display: flex;
  align-items: center;
  padding-left: 15px;
}
.ds-select {
  width: 150px;
  height: 31px;
  box-sizing: border-box;
  display: flex;
  background: #fff;
  border: 1px solid #d0d1d4;
  border-radius: 2px;
  padding-left: 11px;
  line-height: 28px;
  color: #555;
  white-space: nowrap;
}
.ds-select span {
  flex: 1;
}
.ds-select i {
  width: 29px;
  border-left: 1px solid #d0d1d4;
  display: flex;
  align-items: center;
  justify-content: center;
}
.ds-edit {
  width: 21px;
  height: 21px;
  margin-left: 8px;
  fill: none;
  stroke: #555;
  stroke-width: 1.2;
}
.ds-tabs {
  height: 40px;
  flex: none;
  box-sizing: border-box;
  border-bottom: 1px solid #e4e5e8;
}
.ds-tab {
  display: block;
  width: 107px;
  height: 40px;
  box-sizing: border-box;
  padding: 8px 0 0 31px;
  line-height: 24px;
  color: #1db05e;
  border-bottom: 4px solid #1db05e;
}
.ds-search-row {
  margin-top: 6px;
  height: 33px;
  flex: none;
  display: flex;
  align-items: center;
  padding-left: 15px;
}
.ds-search {
  width: 153px;
  height: 33px;
  box-sizing: border-box;
  display: flex;
  align-items: center;
  background: #fff;
  border: 1px solid #d0d1d4;
  border-radius: 2px;
  padding-left: 11px;
  color: #aaa;
  white-space: nowrap;
}
.ds-search svg {
  width: 17px;
  height: 17px;
  margin-right: 7px;
  fill: none;
  stroke: #999;
  stroke-width: 1.2;
}
.kebab {
  margin-left: 16px;
  display: flex;
  flex-direction: column;
  gap: 3px;
}
.kebab b {
  width: 3px;
  height: 3px;
  border-radius: 50%;
  background: #555;
}
.fields {
  flex: none;
  position: relative;
  padding-left: 17px;
}
.fields.upper {
  height: 360px;
  box-sizing: border-box;
  overflow: hidden;
}
.field-head {
  height: 32px;
  margin-top: 4px;
  line-height: 32px;
  color: #555;
}
.field-head.low {
  margin-top: 2px;
}
.field {
  height: 32.6px;
  display: flex;
  align-items: center;
  color: #666;
  white-space: nowrap;
}
.field-ico {
  width: 24px;
  flex: none;
  position: relative;
  display: flex;
  align-items: center;
}
.ico-folder {
  width: 17px;
  height: 17px;
  fill: none;
  stroke: #f5a52d;
  stroke-width: 1.3;
}
.ico-date {
  width: 17px;
  height: 17px;
  fill: none;
  stroke: #1db05e;
  stroke-width: 1.4;
}
.ico-abc {
  font-family: "Liberation Sans", sans-serif;
  font-size: 10.5px;
  letter-spacing: -0.5px;
  color: #1db05e;
  margin-top: -3px;
}
.ico-num {
  padding-left: 2px;
  font-family: "Liberation Sans", sans-serif;
  font-size: 16px;
  font-style: italic;
  color: #1db05e;
}
.ico-num.calc {
  font-size: 14px;
  padding-left: 4px;
}
.ico-plus {
  position: absolute;
  left: -1px;
  top: -5px;
  font-family: "Liberation Sans", sans-serif;
  font-size: 11px;
  color: #1db05e;
}
.fields-thumb {
  position: absolute;
  right: 0;
  top: 1px;
  width: 8px;
  height: 224px;
  background: #d6d6d8;
  border-radius: 4px;
}
.band {
  height: 9px;
  flex: none;
  background: #f0f1f3;
  display: flex;
  align-items: center;
  justify-content: center;
}
.band i {
  width: 13px;
  height: 3px;
  background: #c9cacc;
  border-radius: 2px;
}

/* 右侧标签 */
.rail {
  width: 42px;
  flex: none;
  background: #e7e8ea;
  overflow: hidden;
}
.rail-item {
  height: 63px;
  box-sizing: border-box;
  padding-top: 6px;
  display: flex;
  flex-direction: column;
  align-items: center;
  color: #8a8b8e;
}
.rail-item.on {
  background: #f8f9fb;
  color: #444;
}
.rail-item svg {
  width: 26px;
  height: 26px;
  fill: none;
  stroke: currentColor;
  stroke-width: 1.5;
}
.rail-item.on svg {
  stroke-width: 2.2;
}
.rail-item span {
  margin-top: 1px;
  line-height: 20px;
  white-space: nowrap;
}
.rail-item.layers {
  margin-top: 369px;
  height: auto;
}
.rail-item.layers span {
  width: 15px;
  margin-top: 2px;
  white-space: normal;
}

.red-frame {
  position: absolute;
  left: 672px;
  top: 336px;
  width: 645px;
  height: 309px;
  box-sizing: border-box;
  border: 4px solid #ff1a10;
  border-radius: 4px;
  z-index: 5;
  pointer-events: none;
}
.watermark {
  position: absolute;
  left: 1755px;
  top: 848px;
  font-size: 16px;
  line-height: 22px;
  color: rgba(110, 110, 110, 0.75);
  white-space: nowrap;
  z-index: 6;
}
</style>
